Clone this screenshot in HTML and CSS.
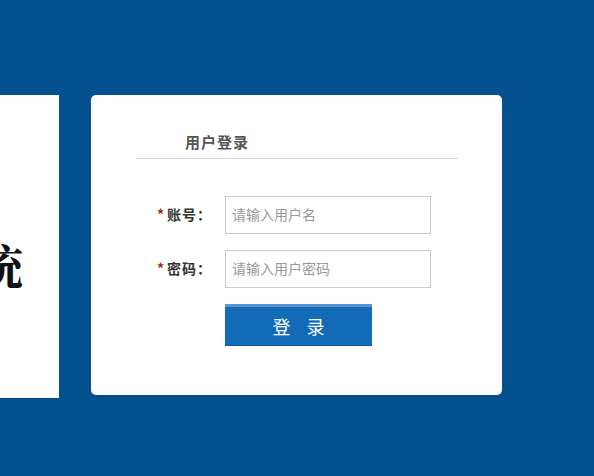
FILE: index.html
```html
<!DOCTYPE html>
<html lang="zh-CN">
<head>
  <meta charset="UTF-8">
  <title>用户登录</title>
  <link rel="stylesheet" href="styles.css">
</head>
<body>
  <div class="page">
    <div class="brand">
      <span class="brand-name">管理系统</span>
    </div>
    <div class="login-box">
      <div class="login-title">用户登录</div>
      <form class="login-form">
        <div class="form-row">
          <label class="form-label" for="user"><em>*</em>账号：</label>
          <input class="form-input" type="text" id="user" placeholder="请输入用户名">
        </div>
        <div class="form-row">
          <label class="form-label" for="pwd"><em>*</em>密码：</label>
          <input class="form-input" type="password" id="pwd" placeholder="请输入用户密码">
        </div>
        <div class="form-row">
          <span class="form-label"></span>
          <button class="login-btn" type="button">登 录</button>
        </div>
      </form>
    </div>
  </div>
</body>
</html>
```

FILE: styles.css
```css
body {
  margin: 0;
  padding: 0;
  background-color: #05508f;
  font-family: "Noto Sans CJK SC", "Noto Sans", sans-serif;
  height: 476px;
  overflow: hidden;
}

.page {
  display: flex;
  align-items: flex-start;
  padding-top: 95px;
  gap: 32px;
}

/* left panel, title cut off by the window edge */
.brand {
  width: 59px;
  height: 303px;
  background-color: #ffffff;
  display: flex;
  justify-content: flex-end;
  align-items: center;
  overflow: hidden;
  flex-shrink: 0;
}

.brand-name {
  white-space: nowrap;
  font-size: 48px;
  font-weight: bold;
  color: #111;
  padding-right: 36px;
  margin-top: 36px;
  font-family: "Noto Serif CJK SC", "Noto Sans CJK SC", serif;
}

.login-box {
  width: 411px;
  height: 300px;
  background-color: #ffffff;
  border-radius: 5px;
  box-sizing: border-box;
  padding: 30px 44px 0 45px;
}

.login-title {
  font-size: 15px;
  letter-spacing: 1px;
  font-weight: bold;
  color: #555555;
  padding-left: 49px;
  line-height: 33px;
  border-bottom: 1px solid #d6d6d6;
}

.login-form {
  padding-top: 37px;
}

.form-row {
  display: flex;
  align-items: center;
  margin-bottom: 16px;
}

.form-label {
  width: 89px;
  text-align: right;
  padding-right: 13px;
  padding-bottom: 2px;
  font-size: 14px;
  font-weight: bold;
  color: #333333;
  letter-spacing: 1px;
  box-sizing: border-box;
  flex-shrink: 0;
}

.form-label em {
  font-style: normal;
  color: #c0161c;
  margin-right: 2px;
}

.form-input {
  width: 206px;
  height: 38px;
  box-sizing: border-box;
  border: 1px solid #cccccc;
  padding: 0 6px 2px;
  font-size: 14px;
  font-family: "Noto Sans CJK SC", "Noto Sans", sans-serif;
  color: #333;
  outline: none;
}

.form-input::placeholder {
  color: #999999;
}

.login-btn {
  width: 147px;
  height: 42px;
  background-color: #136bb8;
  border: none;
  border-top: 3px solid #5b95cb;
  border-bottom: 1px solid #0f5a9c;
  color: #ffffff;
  font-size: 18px;
  letter-spacing: 6px;
  padding: 0 0 0 6px;
  cursor: pointer;
  font-family: "Noto Sans CJK SC", "Noto Sans", sans-serif;
}
```
